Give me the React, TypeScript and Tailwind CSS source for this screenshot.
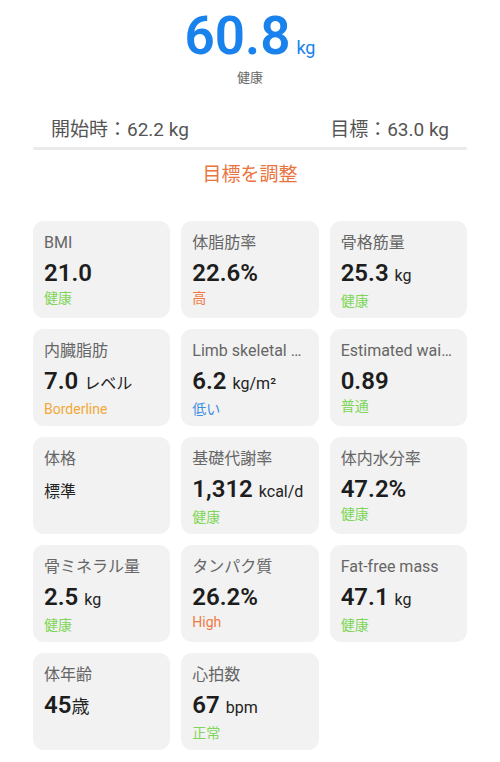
import React from 'react'

type Metric = {
  label: string
  value: string
  unit?: string
  unitTight?: boolean
  status?: string
  tone?: 'green' | 'orange' | 'yellow' | 'blue'
  plain?: boolean
}

const metrics: Metric[] = [
  { label: 'BMI', value: '21.0', status: '健康', tone: 'green' },
  { label: '体脂肪率', value: '22.6%', status: '高', tone: 'orange' },
  { label: '骨格筋量', value: '25.3', unit: 'kg', status: '健康', tone: 'green' },
  { label: '内臓脂肪', value: '7.0', unit: 'レベル', status: 'Borderline', tone: 'yellow' },
  { label: 'Limb skeletal muscle index', value: '6.2', unit: 'kg/m²', status: '低い', tone: 'blue' },
  { label: 'Estimated waist-to-hip ratio', value: '0.89', status: '普通', tone: 'green' },
  { label: '体格', value: '標準', plain: true },
  { label: '基礎代謝率', value: '1,312', unit: 'kcal/d', status: '健康', tone: 'green' },
  { label: '体内水分率', value: '47.2%', status: '健康', tone: 'green' },
  { label: '骨ミネラル量', value: '2.5', unit: 'kg', status: '健康', tone: 'green' },
  { label: 'タンパク質', value: '26.2%', status: 'High', tone: 'orange' },
  { label: 'Fat-free mass', value: '47.1', unit: 'kg', status: '健康', tone: 'green' },
  { label: '体年齢', value: '45', unit: '歳', unitTight: true },
  { label: '心拍数', value: '67', unit: 'bpm', status: '正常', tone: 'green' },
]

const toneClass = {
  green: 'text-[#7fd65a]',
  orange: 'text-[#f07a45]',
  yellow: 'text-[#f3a935]',
  blue: 'text-[#3c8fe3]',
}

function MetricCard({ m }: { m: Metric }) {
  return (
    <div className="h-[97px] rounded-[11px] bg-[#f2f2f2] pl-[11px] pr-[10px] pt-[12px]">
      <div className="truncate text-[16px] leading-[20px] text-[#666]">{m.label}</div>
      {m.plain ? (
        <div className="mt-[10px] text-[16px] leading-[26px] text-[#222]">{m.value}</div>
      ) : (
        <div className="mt-[6px] flex items-baseline whitespace-nowrap leading-[28px] text-[#1d1d1d]">
          <span className="text-[24px] font-semibold">{m.value}</span>
          {m.unit && (
            <span className={`${m.unitTight ? 'ml-0 text-[18px]' : 'ml-[6px] text-[16px]'} text-[#222]`}>
              {m.unit}
            </span>
          )}
        </div>
      )}
      {m.status && (
        <div className={`mt-[2px] text-[14px] leading-[18px] ${toneClass[m.tone ?? 'green']}`}>{m.status}</div>
      )}
    </div>
  )
}

export default function App() {
  return (
    <div
      className="min-h-[762px] w-[500px] bg-white px-[33px]"
      style={{ fontFamily: 'Roboto, "Noto Sans CJK JP", sans-serif' }}
    >
      <div className="flex h-[56px] items-baseline justify-center pt-[8px] leading-[56px] text-[#1a82ec]">
        <span className="text-[53px] font-semibold">60.8</span>
        <span className="ml-[6px] text-[18px]">kg</span>
      </div>
      <div className="mt-[13px] text-center text-[13px] leading-[18px] text-[#666]">健康</div>

      <div className="mt-[31px] flex justify-between px-[18px] text-[19px] leading-[24px] text-[#555]">
        <span>開始時：62.2 kg</span>
        <span>目標：63.0 kg</span>
      </div>
      <div className="mt-[5px] h-[3px] rounded-full bg-[#ebebeb]" />

      <div className="mt-[13px] text-center text-[19px] leading-[24px] text-[#ea7440]">目標を調整</div>

      <div className="mt-[34px] grid grid-cols-3 gap-[11px]">
        {metrics.map((m) => (
          <MetricCard key={m.label} m={m} />
        ))}
      </div>
    </div>
  )
}
